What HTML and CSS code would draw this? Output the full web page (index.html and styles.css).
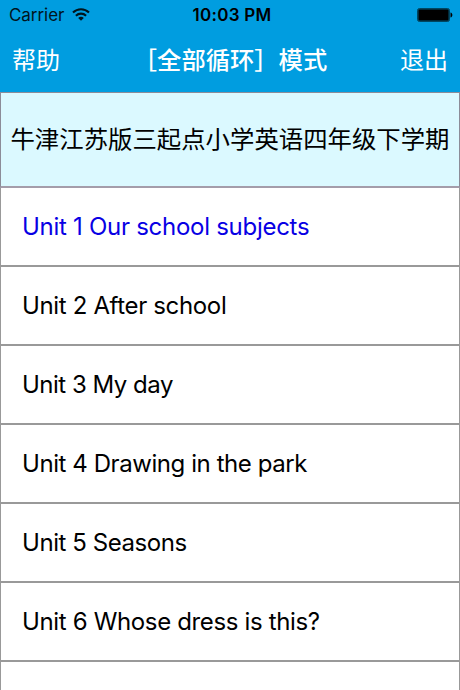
FILE: index.html
```html
<!DOCTYPE html>
<html lang="zh-CN">
<head>
<meta charset="utf-8">
<title>全部循环</title>
<link rel="stylesheet" href="styles.css">
</head>
<body>
<header class="top">
  <div class="status">
    <div class="carrier"><span>Carrier</span>
      <svg class="wifi" width="18" height="13" viewBox="0 0 18 13" fill="none" stroke="#00151d" stroke-width="2.1"><path d="M1 4.600C5.500.2 12.500.2 17 4.600M3.900 7.700c2.900-2.800 7.300-2.800 10.200 0"/><path d="M6.200 9.900c1.600-1.400 4-1.400 5.600 0L9 12.700z" fill="#00151d" stroke="none"/></svg>
    </div>
    <div class="time">10:03 PM</div>
    <svg class="battery" width="36" height="14" viewBox="0 0 36 14"><rect x=".5" y=".5" width="32" height="13" rx="2" fill="#005474" stroke="#004661"/><rect x="1.500" y="1.500" width="30" height="11" rx="1"/><path d="M33.500 4.500c2.500.6 2.500 4.400 0 5z"/></svg>
  </div>
  <nav class="nav"><span>帮助</span><h1>［全部循环］模式</h1><span class="exit">退出</span></nav>
</header>
<main>
  <h2 class="book"><span>牛津江苏版三起点小学英语四年级下学期</span></h2>
  <ul class="units">
    <li class="current">Unit 1 Our school subjects</li>
    <li class="after">Unit 2 After school</li>
    <li class="day">Unit 3 My day</li>
    <li class="drawing">Unit 4 Drawing in the park</li>
    <li class="seasons">Unit 5 Seasons</li>
    <li class="dress">Unit 6 Whose dress is this?</li>
    <li class="next"></li>
  </ul>
</main>
</body>
</html>
```

FILE: styles.css
```css
* { box-sizing: border-box; }
body { margin: 0; height: 690px; overflow: hidden; background: #fff; color: #000; font-family: Inter, "Noto Sans CJK SC", sans-serif; }
.top { height: 92px; background: #009de0; }
.status { height: 30px; display: grid; grid-template-columns: 1fr auto 1fr; align-items: center; padding: 0 7px 0 9px; color: #00151d; font-size: 17px; }
.carrier { display: flex; align-items: center; gap: 8px; letter-spacing: -.05px; }
.wifi { margin-top: -2px; }
.time { padding-left: 2px; color: #000; font-weight: 600; letter-spacing: .25px; }
.battery { justify-self: end; }
.nav { height: 62px; display: grid; grid-template-columns: 1fr auto 1fr; align-items: center; padding: 0 12px 5px; color: #fff; font-size: 24px; font-weight: 400; }
.nav h1 { margin: 0; font-size: 24.300px; font-weight: 500; }
.exit { justify-self: end; }
.book { margin: 0; height: 96px; display: flex; align-items: center; justify-content: center; padding-bottom: 4px; border: 1px solid #8c8c98; border-bottom: 2px solid #a49daa; background: #dbf9ff; font-size: 24.400px; font-weight: 400; white-space: nowrap; }
.units { margin: 0; padding: 0; list-style: none; }
.units li { height: 79px; display: flex; align-items: center; padding-left: 21px; border: 1px solid #999; border-top: 0; border-bottom-width: 2px; font-size: 24px; letter-spacing: -.35px; }
.units .current { color: #0800e4; letter-spacing: -.28px; }
.units .drawing { letter-spacing: -.43px; }
.units .day { letter-spacing: -.5px; }
.units .seasons { letter-spacing: -.43px; }
.units .next { height: 28px; border-bottom: 0; }
```
